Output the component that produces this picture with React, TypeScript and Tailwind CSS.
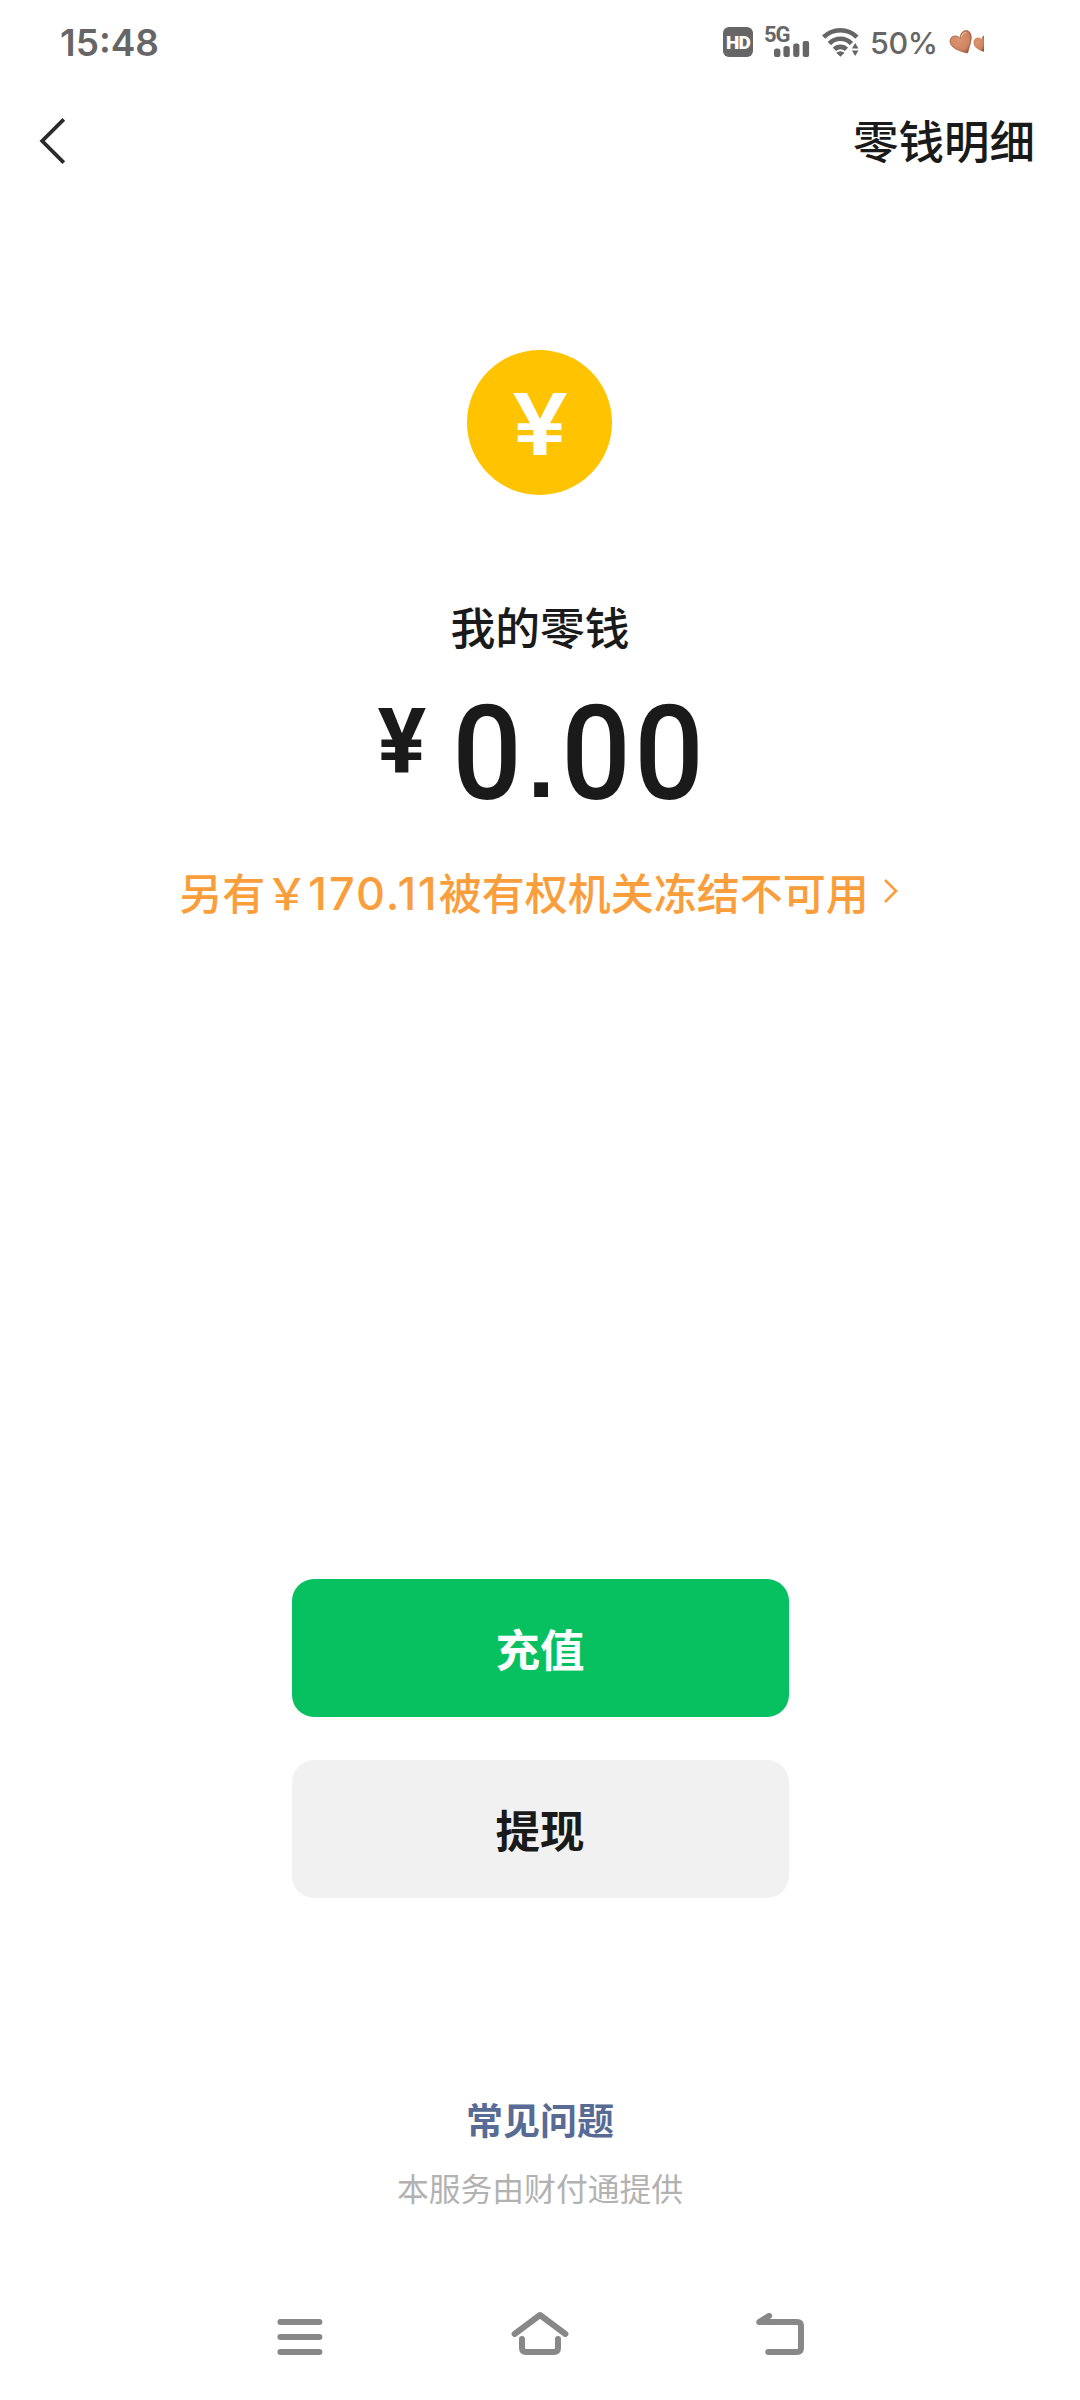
import type { ReactNode } from 'react';

function HdIcon() {
  return (
    <div className="flex h-[30px] w-[30px] items-center justify-center rounded-[6px] bg-[#666666] font-['Roboto'] text-[19px] leading-none font-black tracking-[-0.8px] text-white">
      HD
    </div>
  );
}

function SignalIcon() {
  return (
    <div className="relative ml-[12px] h-[30px] w-[45px]">
      <span className="absolute -top-[1px] -left-[1px] font-['Roboto'] text-[22px] leading-[18px] font-bold tracking-[-1px] text-[#666666]">
        5G
      </span>
      <svg className="absolute top-0 left-0" width="45" height="30" viewBox="0 0 45 30" fill="#666666">
        <rect x="9" y="21.5" width="6.4" height="8.5" rx="2.6" />
        <rect x="18.4" y="19" width="6.4" height="11" rx="2.6" />
        <rect x="28.2" y="16.5" width="6.2" height="13.5" rx="2.2" />
        <rect x="37.7" y="14" width="6.4" height="16" rx="2" />
      </svg>
    </div>
  );
}

function WifiIcon() {
  return (
    <svg className="ml-[12px]" width="38" height="30" viewBox="0 0 38 30">
      <g fill="none" stroke="#666666" strokeWidth="4.6">
        <path d="M1.6 10.2A23.5 23.5 0 0 1 35 10.2" />
        <path d="M7.4 16.6A15 15 0 0 1 29.4 16.6" />
        <path d="M12.4 22.4A8.4 8.4 0 0 1 24.4 22.4" />
      </g>
      <path d="M14.2 25.8Q18.4 22.8 22.6 25.8L18.4 29.8Z" fill="#666666" />
      <path d="M33.2 15L37.4 22.4H29Z M33.2 30L37.4 22.8H29Z" fill="#ffffff" />
      <path d="M33.2 16L36.5 21.4H29.9Z M33.2 29L36.5 23.6H29.9Z" fill="#666666" />
    </svg>
  );
}

function HeartsIcon() {
  return (
    <svg className="ml-[12px]" width="36" height="26" viewBox="0 0 36 26">
      <defs>
        <radialGradient id="heart" cx="0.42" cy="0.4" r="0.75">
          <stop offset="0" stopColor="#dd9672" />
          <stop offset="0.65" stopColor="#cd8460" />
          <stop offset="1" stopColor="#8d4a30" />
        </radialGradient>
      </defs>
      <path
        d="M18.6 24C13 23 2.6 19.6 1.2 13.8C0.4 9.8 2.8 7 6.2 7C8.4 7 10 8 11 9.4C11.2 5 13.4 1.6 17.2 1.6C21.4 1.8 23 6.4 22 11.2C21.2 15.6 19.8 19.6 18.6 24Z"
        fill="url(#heart)"
        stroke="#8f5238"
        strokeWidth="0.7"
      />
      <path d="M12.6 7.4C13.2 5.2 14.8 3.8 17 3.6" fill="none" stroke="#f3c4ab" strokeWidth="1" strokeLinecap="round" />
      <path
        d="M35 22.8C30 21.4 25.4 18.6 24.6 14.4C24.2 10.8 26.2 8.4 29 8.4C30.6 8.4 31.8 9.2 32.4 10.2C32.8 8.4 33.6 7.2 35 6.6Z"
        fill="url(#heart)"
      />
    </svg>
  );
}

function StatusBar() {
  return (
    <div className="flex h-[84px] items-center justify-between pr-[95px] pl-[60px] text-[#666666]">
      <span className="font-['Inter'] text-[37px] leading-none font-semibold">15:48</span>
      <div className="flex items-center">
        <HdIcon />
        <SignalIcon />
        <WifiIcon />
        <span className="mt-[2px] ml-[10px] w-[67px] font-['Inter'] text-[30.5px] leading-none font-medium tracking-[-0.4px] whitespace-nowrap">
          50%
        </span>
        <HeartsIcon />
      </div>
    </div>
  );
}

function Header() {
  return (
    <header className="flex h-[114px] items-center justify-between pr-[45px] pl-[38px]">
      <svg width="30" height="48" viewBox="0 0 30 48" fill="none" stroke="#2b2b2b" strokeWidth="3.8">
        <path d="M25.8 2.4L4.2 24L25.8 45.6" />
      </svg>
      <span className="pb-[3px] text-[45.5px] leading-none font-medium">零钱明细</span>
    </header>
  );
}

function Balance() {
  return (
    <div className="mt-[33px] flex h-[130px] items-start pr-[3px] font-['Roboto'] text-[131px] leading-none font-medium">
      <span className="mt-[8px] w-[60px] text-center text-[91px] font-bold">¥</span>
      <span className="ml-[18px] w-[73px] scale-x-[0.935] text-center">0</span>
      <span className="w-[36px] text-center font-['Liberation_Sans'] text-[98px] leading-[149px] font-bold">.</span>
      <span className="w-[73px] scale-x-[0.935] text-center">0</span>
      <span className="w-[73px] scale-x-[0.935] text-center">0</span>
    </div>
  );
}

function ActionButton({ className, children }: { className: string; children: ReactNode }) {
  return (
    <button className={`h-[138px] w-[497px] rounded-[22px] text-[44.5px] leading-none font-bold ${className}`}>
      {children}
    </button>
  );
}

function NavBar() {
  return (
    <nav className="flex h-[60px] items-center justify-between px-[270px]">
      <svg width="60" height="60" viewBox="0 0 60 60" fill="none" stroke="#888888" strokeWidth="6" strokeLinecap="round">
        <path d="M10.4 15H49.4M10.4 30H49.4M10.4 45H49.4" />
      </svg>
      <svg
        width="60"
        height="60"
        viewBox="0 0 60 60"
        fill="none"
        stroke="#888888"
        strokeWidth="6"
        strokeLinecap="round"
        strokeLinejoin="round"
      >
        <path d="M4.6 27L30 8L55.4 27" />
        <path d="M12 32V41Q12 45 16 45H44Q48 45 48 41V32" />
      </svg>
      <svg
        width="60"
        height="60"
        viewBox="0 0 60 60"
        fill="none"
        stroke="#888888"
        strokeWidth="6"
        strokeLinecap="round"
        strokeLinejoin="round"
      >
        <path d="M18.2 45H47Q51 45 51 41V19Q51 15 47 15H9.2L19.2 8.8" />
        <path d="M10 15L19 9L18 15Z" fill="#888888" strokeWidth="3" />
      </svg>
    </nav>
  );
}

export default function App() {
  return (
    <div className="flex h-[2400px] w-[1080px] flex-col overflow-hidden bg-white font-['Noto_Sans_CJK_SC',sans-serif] text-[#1a1a1a]">
      <StatusBar />
      <Header />

      <main className="flex flex-col items-center">
        <div className="mt-[152px] mr-px flex h-[145px] w-[145px] items-center justify-center rounded-full bg-[#ffc300] pt-[4px] font-['Inter'] text-[85px] leading-none font-semibold text-white">
          <span className="scale-x-[1.18]">¥</span>
        </div>

        <div className="mt-[101px] h-[60px] text-[44.8px] leading-[60px] font-medium">我的零钱</div>

        <Balance />

        <div className="mt-[42px] flex h-[60px] items-center pr-[2px] text-[43px] leading-[60px] font-medium text-[#fa9d3b]">
          <span className="whitespace-nowrap">
            另有￥<span className="font-['Inter'] text-[45px] leading-none tracking-[2px]">170.11</span>被有权机关冻结不可用
          </span>
          <svg className="ml-[14px]" width="16" height="26" viewBox="0 0 16 26" fill="none" stroke="#fa9d3b" strokeWidth="2.6">
            <path d="M2 2L13 13L2 24" />
          </svg>
        </div>

        <div className="mt-[658px] flex flex-col gap-[43px]">
          <ActionButton className="bg-[#07c160] text-white">充值</ActionButton>
          <ActionButton className="bg-[#f1f1f1] text-[#1a1a1a]">提现</ActionButton>
        </div>

        <div className="mt-[196px] h-[50px] text-[37px] leading-[50px] font-bold text-[#576b95]">常见问题</div>
        <div className="mt-[18px] h-[50px] text-[31.8px] leading-[50px] text-[#b2b2b2]">本服务由财付通提供</div>
      </main>

      <div className="mt-auto pb-[33px]">
        <NavBar />
      </div>
    </div>
  );
}
